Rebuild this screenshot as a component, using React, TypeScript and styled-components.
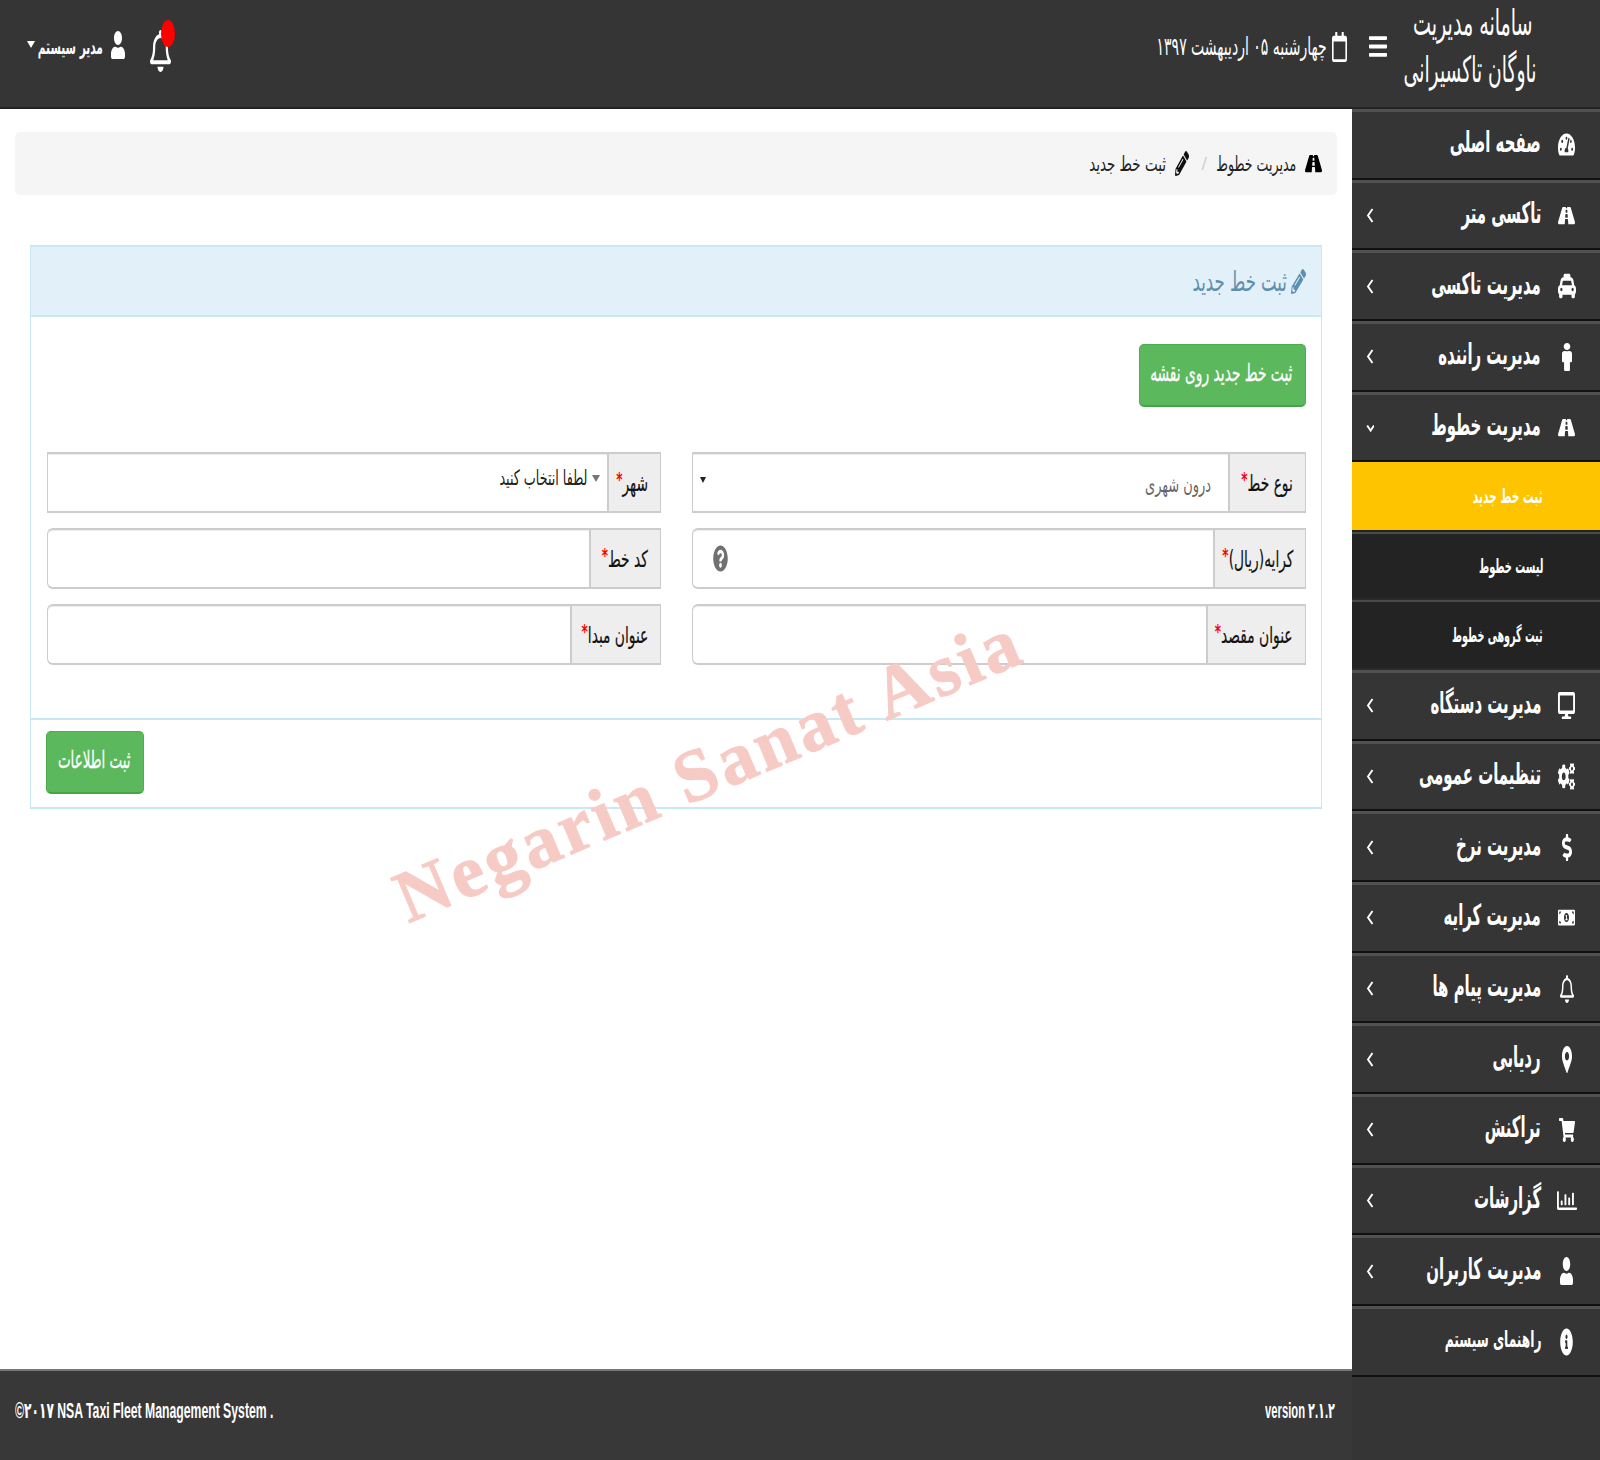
import React from 'react';
import styled, { createGlobalStyle } from 'styled-components';
import { IconType } from 'react-icons';
import {
  FaBars,
  FaCogs,
  FaDesktop,
  FaDollarSign,
  FaInfoCircle,
  FaMale,
  FaMapMarkerAlt,
  FaMoneyBillAlt,
  FaPencilAlt,
  FaQuestionCircle,
  FaRegBell,
  FaRegCalendar,
  FaRegChartBar,
  FaRoad,
  FaShoppingCart,
  FaTachometerAlt,
  FaTaxi,
  FaUser
} from 'react-icons/fa';

const GlobalStyle = createGlobalStyle`
  html, body {
    margin: 0;
    padding: 0;
    background: #fff;
  }
  body {
    font-family: "DejaVu Sans", "Noto Sans", sans-serif;
    direction: rtl;
  }
  * {
    box-sizing: border-box;
  }
`;

const Page = styled.div`
  width: 1600px;
  height: 1460px;
  display: flex;
  flex-direction: column;
  overflow: hidden;
  position: relative;
`;

const Squeeze = styled.span<{ $x: number; $origin?: string }>`
  display: inline-block;
  white-space: nowrap;
  transform: scaleX(${(p) => p.$x});
  transform-origin: ${(p) => p.$origin ?? 'right'} center;
`;

const Header = styled.header`
  height: 109px;
  flex: none;
  background: #353535;
  border-bottom: 2px solid #222;
  display: flex;
  align-items: center;
  color: #fff;
`;

const Brand = styled.div`
  width: 213px;
  flex: none;
  padding-right: 64px;
  margin-top: -16px;
  font-size: 36px;
  line-height: 47px;
  display: flex;
  flex-direction: column;
  align-items: flex-start;
`;

const BrandFirstLine = styled(Squeeze)`
  margin-right: 3px;
`;

const Burger = styled(FaBars)`
  width: 18px;
  height: 27px;
  margin-top: -14px;
  flex: none;
`;

const DateBox = styled.div`
  display: flex;
  align-items: center;
  gap: 5px;
  margin-right: 22px;
  margin-top: -14px;
  font-size: 25px;
`;

const DateIcon = styled(FaRegCalendar)`
  width: 15px;
  height: 30px;
`;

const HeaderLeft = styled.div`
  margin-right: auto;
  display: flex;
  align-items: center;
  padding-left: 27px;
  margin-top: -18px;
  flex-direction: row-reverse;
`;

const UserMenu = styled.div`
  display: flex;
  align-items: center;
  flex-direction: row-reverse;
  font-size: 20px;
  font-weight: bold;
`;

const Caret = styled.i<{ $color?: string; $size?: number }>`
  display: inline-block;
  border-style: solid;
  border-width: ${(p) => p.$size ?? 6}px ${(p) => (p.$size ?? 6) * 0.62}px 0;
  border-color: ${(p) => p.$color ?? '#fff'} transparent transparent;
`;

const NameBox = styled.span`
  width: 64px;
  margin-left: 4px;
  margin-top: 4px;
  display: inline-block;
`;

const UserIcon = styled(FaUser)`
  width: 14px;
  height: 28px;
  margin-left: 8px;
`;

const BellBox = styled.div`
  position: relative;
  margin-left: 25px;
  width: 21px;
  height: 42px;
  margin-top: 12px;
`;

const BellIcon = styled(FaRegBell)`
  width: 21px;
  height: 42px;
  display: block;
`;

const Badge = styled.span`
  position: absolute;
  top: -10px;
  left: 11px;
  width: 14px;
  height: 27px;
  border-radius: 50%;
  background: #f00;
`;

const Body = styled.div`
  flex: 1;
  display: flex;
  min-height: 0;
`;

const Sidebar = styled.nav`
  width: 248px;
  flex: none;
  background: #353535;
`;

const MenuRow = styled.div`
  height: 70.7px;
  display: flex;
  align-items: center;
  padding: 0 25px 0 14px;
  color: #fff;
  border-top: 3px solid #515151;
  border-bottom: 2px solid #111;
  background: #353535;
`;

const MenuIconBox = styled.span<{ $w: number; $h: number }>`
  width: 17px;
  height: 28px;
  flex: none;
  display: flex;
  align-items: center;
  justify-content: center;
  margin-left: 17px;

  svg {
    width: ${(p) => p.$w}px;
    height: ${(p) => p.$h}px;
    flex: none;
  }
`;

const MenuLabel = styled.span<{ $small?: boolean }>`
  font-size: ${(p) => (p.$small ? 23 : 29)}px;
  font-weight: bold;
  flex: 1;
  min-width: 0;
  margin-top: -5px;
`;

const Chevron = styled.svg`
  width: 8px;
  height: 17px;
  flex: none;
  fill: none;
  stroke: #fff;
  stroke-width: 1.9;
`;

const SubRow = styled.div<{ $active?: boolean; $height: number }>`
  height: ${(p) => p.$height}px;
  display: flex;
  align-items: center;
  padding-right: 57px;
  color: #fff;
  font-size: 20px;
  font-weight: bold;
  background: ${(p) => (p.$active ? '#ffc400' : '#232323')};
  border-top: ${(p) => (p.$active ? '0' : '2px solid #4a4a4a')};
  border-bottom: 2px solid ${(p) => (p.$active ? '#222' : '#2a2a2a')};
`;

const Main = styled.main`
  flex: 1;
  min-width: 0;
  display: flex;
  flex-direction: column;
  position: relative;
`;

const Content = styled.div`
  flex: 1;
  padding: 23px 15px 0;
`;

const Breadcrumb = styled.div`
  height: 63px;
  background: #f5f5f5;
  border-radius: 5px;
  display: flex;
  align-items: center;
  padding-right: 15px;
  color: #222;
  font-size: 21px;
  margin-bottom: 50px;
`;

const CrumbRoad = styled(FaRoad)`
  width: 17px;
  height: 23px;
  color: #000;
  margin-left: 9px;
`;

const CrumbText = styled.span<{ $width: number }>`
  width: ${(p) => p.$width}px;
  display: inline-block;
`;

const CrumbSep = styled.span`
  color: #ccc;
  margin: 0 9px 0 13px;
  font-size: 16px;
`;

const CrumbPencil = styled(FaPencilAlt)`
  width: 14px;
  height: 25px;
  color: #111;
  margin-left: 9px;
`;

const Panel = styled.section`
  margin: 0 15px;
  border: solid #c6e9f3;
  border-width: 2px 1px;
  height: 564px;
  display: flex;
  flex-direction: column;
`;

const PanelHead = styled.div`
  height: 70px;
  flex: none;
  background: #e1f0f9;
  border-bottom: 2px solid #c6e9f3;
  color: #5f8fae;
  display: flex;
  align-items: center;
  padding-right: 15px;
  font-size: 28px;
`;

const PanelPencil = styled(FaPencilAlt)`
  width: 15px;
  height: 25px;
  margin-left: 4px;
  color: #5f8fae;
`;

const PanelBody = styled.div`
  height: 401px;
  flex: none;
  padding: 27px 15px 0 16px;
`;

const GreenButton = styled.button<{ $width: number; $height: number }>`
  width: ${(p) => p.$width}px;
  height: ${(p) => p.$height}px;
  background: #5cb85c;
  border: 1px solid #4cae4c;
  border-bottom: 2px solid #46a546;
  border-radius: 5px;
  color: #fff;
  font-family: inherit;
  font-size: 24px;
  padding: 0 13px 5px;
  text-align: right;
  display: block;
  -webkit-text-stroke: 0.3px #fff;
`;

const Grid = styled.div`
  margin-top: 45px;
  display: grid;
  grid-template-columns: 1fr 1fr;
  column-gap: 31px;
  row-gap: 15px;
`;

const Group = styled.div`
  display: flex;
  height: 61px;
`;

const Addon = styled.label<{ $width: number }>`
  width: ${(p) => p.$width}px;
  flex: none;
  background: #eee;
  border: solid #ccc;
  border-width: 2px 1px 2px 2px;
  color: #111;
  font-size: 23px;
  display: flex;
  align-items: center;
  padding-right: 12px;
  -webkit-text-stroke: 0.2px #111;
`;

const Star = styled.span`
  color: #f00;
  font-size: 20px;
  font-weight: bold;
  position: relative;
  top: -5px;
  -webkit-text-stroke: 0;
`;

const Field = styled.div<{ $square?: boolean }>`
  flex: 1;
  min-width: 0;
  background: #fff;
  border: solid #ccc;
  border-width: 2px 0 2px 1px;
  border-radius: ${(p) => (p.$square ? '0' : '6px 0 0 6px')};
  box-shadow: inset 0 1px 1px rgba(0, 0, 0, 0.075);
  position: relative;
  display: flex;
  align-items: center;
`;

const SelectText = styled.span<{ $color: string; $offset: number; $lift: number }>`
  color: ${(p) => p.$color};
  font-size: 21px;
  margin-right: ${(p) => p.$offset}px;
  margin-top: ${(p) => p.$lift}px;
  display: inline-flex;
`;

const NativeArrow = styled(Caret)`
  margin: -6px auto 0 7px;
`;

const Question = styled(FaQuestionCircle)`
  position: absolute;
  left: 20px;
  top: 15px;
  width: 15px;
  height: 27px;
  color: #707070;
`;

const PanelFoot = styled.div`
  flex: 1;
  border-top: 2px solid #c6e9f3;
  padding: 11px 14px 11px 15px;
  display: flex;
  justify-content: flex-end;
`;

const Footer = styled.footer`
  height: 91px;
  flex: none;
  background: #383838;
  border-top: 2px solid #777;
  color: #fff;
  display: flex;
  align-items: center;
  justify-content: space-between;
  padding: 0 17px 10px 15px;
  font-family: "Liberation Sans", "DejaVu Sans", sans-serif;
  font-size: 22px;
  font-weight: bold;
`;

const Watermark = styled.div`
  position: absolute;
  left: 372px;
  top: 727px;
  font-family: "Liberation Serif", serif;
  font-weight: bold;
  font-size: 74px;
  letter-spacing: 3.6px;
  color: #f7cbc5;
  -webkit-text-stroke: 1px #f7cbc5;
  transform: rotate(-23deg);
  white-space: nowrap;
  direction: ltr;
  pointer-events: none;
`;

interface MenuEntry {
  label: string;
  icon: IconType;
  width: number;
  height: number;
  squeeze?: number;
  small?: boolean;
  noArrow?: boolean;
  open?: boolean;
}

const MENU_TOP: MenuEntry[] = [
  { label: 'صفحه اصلی', icon: FaTachometerAlt, width: 17, height: 25, noArrow: true },
  { label: 'تاکسی متر', icon: FaRoad, width: 17, height: 23 },
  { label: 'مدیریت تاکسی', icon: FaTaxi, width: 18, height: 28 },
  { label: 'مدیریت راننده', icon: FaMale, width: 10, height: 28 },
  { label: 'مدیریت خطوط', icon: FaRoad, width: 17, height: 23, open: true }
];

const SUB_MENU = [
  { label: 'ثبت خط جدید', active: true, height: 69.5, squeeze: 0.53 },
  { label: 'لیست خطوط', height: 68.5, squeeze: 0.49 },
  { label: 'ثبت گروهی خطوط', height: 69.5, squeeze: 0.48 }
];

const MENU_BOTTOM: MenuEntry[] = [
  { label: 'مدیریت دستگاه', icon: FaDesktop, width: 17, height: 27 },
  { label: 'تنظیمات عمومی', icon: FaCogs, width: 17, height: 27 },
  { label: 'مدیریت نرخ', icon: FaDollarSign, width: 10, height: 27 },
  { label: 'مدیریت کرایه', icon: FaMoneyBillAlt, width: 17, height: 21 },
  { label: 'مدیریت پیام ها', icon: FaRegBell, width: 14, height: 28 },
  { label: 'ردیابی', icon: FaMapMarkerAlt, width: 10, height: 27 },
  { label: 'تراکنش', icon: FaShoppingCart, width: 16, height: 24 },
  { label: 'گزارشات', icon: FaRegChartBar, width: 20, height: 25 },
  { label: 'مدیریت کاربران', icon: FaUser, width: 13, height: 28 },
  { label: 'راهنمای سیستم', icon: FaInfoCircle, width: 13, height: 28, small: true, squeeze: 0.53, noArrow: true }
];

function MenuItem({ entry }: { entry: MenuEntry }) {
  const Icon = entry.icon;
  return (
    <MenuRow>
      <MenuIconBox $w={entry.width} $h={entry.height}>
        <Icon preserveAspectRatio="none" />
      </MenuIconBox>
      <MenuLabel $small={entry.small}>
        <Squeeze $x={entry.squeeze ?? 0.515}>{entry.label}</Squeeze>
      </MenuLabel>
      {!entry.noArrow && (
        <Chevron viewBox="0 0 8 16">
          {entry.open ? <path d="M1.2 6 L4.6 11 L8 6" /> : <path d="M6.5 1.5 L2 8 L6.5 14.5" />}
        </Chevron>
      )}
    </MenuRow>
  );
}

function InputGroup({ label, width, children }: { label: string; width: number; children?: React.ReactNode }) {
  return (
    <Group>
      <Addon $width={width}>
        <Squeeze $x={0.6}>
          {label}
          <Star>*</Star>
        </Squeeze>
      </Addon>
      {children ?? <Field />}
    </Group>
  );
}

export default function App() {
  return (
    <>
      <GlobalStyle />
      <Page>
        <Header>
          <Brand>
            <BrandFirstLine $x={0.53}>سامانه مدیریت</BrandFirstLine>
            <Squeeze $x={0.52}>ناوگان تاکسیرانی</Squeeze>
          </Brand>
          <Burger preserveAspectRatio="none" />
          <DateBox>
            <DateIcon preserveAspectRatio="none" />
            <Squeeze $x={0.56}>چهارشنبه ۰۵ اردیبهشت ۱۳۹۷</Squeeze>
          </DateBox>
          <HeaderLeft>
            <UserMenu>
              <Caret $size={7} />
              <NameBox>
                <Squeeze $x={0.53}>مدیر سیستم</Squeeze>
              </NameBox>
              <UserIcon preserveAspectRatio="none" />
            </UserMenu>
            <BellBox>
              <BellIcon preserveAspectRatio="none" />
              <Badge />
            </BellBox>
          </HeaderLeft>
        </Header>
        <Body>
          <Sidebar>
            {MENU_TOP.map((entry) => (
              <MenuItem key={entry.label} entry={entry} />
            ))}
            {SUB_MENU.map((item) => (
              <SubRow key={item.label} $active={item.active} $height={item.height}>
                <Squeeze $x={item.squeeze}>{item.label}</Squeeze>
              </SubRow>
            ))}
            {MENU_BOTTOM.map((entry) => (
              <MenuItem key={entry.label} entry={entry} />
            ))}
          </Sidebar>
          <Main>
            <Content>
              <Breadcrumb>
                <CrumbRoad preserveAspectRatio="none" />
                <CrumbText $width={80}>
                  <Squeeze $x={0.6}>مدیریت خطوط</Squeeze>
                </CrumbText>
                <CrumbSep>/</CrumbSep>
                <CrumbPencil preserveAspectRatio="none" />
                <CrumbText $width={78}>
                  <Squeeze $x={0.64}>ثبت خط جدید</Squeeze>
                </CrumbText>
              </Breadcrumb>
              <Panel>
                <PanelHead>
                  <PanelPencil preserveAspectRatio="none" />
                  <Squeeze $x={0.59}>ثبت خط جدید</Squeeze>
                </PanelHead>
                <PanelBody>
                  <GreenButton $width={167} $height={63}>
                    <Squeeze $x={0.575}>ثبت خط جدید روی نقشه</Squeeze>
                  </GreenButton>
                  <Grid>
                    <InputGroup label="نوع خط" width={78}>
                      <Field $square>
                        <SelectText $color="#666" $offset={17} $lift={4}>
                          <Squeeze $x={0.617}>درون شهری</Squeeze>
                        </SelectText>
                        <NativeArrow $color="#222" $size={6} />
                      </Field>
                    </InputGroup>
                    <InputGroup label="شهر" width={54}>
                      <Field $square>
                        <SelectText $color="#777" $offset={7} $lift={-9}>
                          <Caret $color="#777" $size={7} />
                        </SelectText>
                        <SelectText $color="#222" $offset={5} $lift={-9}>
                          <Squeeze $x={0.605}>لطفا انتخاب کنید</Squeeze>
                        </SelectText>
                      </Field>
                    </InputGroup>
                    <InputGroup label="کرایه(ریال)" width={93}>
                      <Field>
                        <Question preserveAspectRatio="none" />
                      </Field>
                    </InputGroup>
                    <InputGroup label="کد خط" width={72} />
                    <InputGroup label="عنوان مقصد" width={100} />
                    <InputGroup label="عنوان مبدا" width={91} />
                  </Grid>
                </PanelBody>
                <PanelFoot>
                  <GreenButton $width={98} $height={63}>
                    <Squeeze $x={0.56}>ثبت اطلاعات</Squeeze>
                  </GreenButton>
                </PanelFoot>
              </Panel>
            </Content>
            <Footer>
              <span dir="ltr">
                <Squeeze $x={0.51} $origin="right">version ۲.۱.۲</Squeeze>
              </span>
              <span dir="ltr">
                <Squeeze $x={0.556} $origin="left">©۲۰۱۷ NSA Taxi Fleet Management System .</Squeeze>
              </span>
            </Footer>
          </Main>
        </Body>
        <Watermark>Negarin Sanat Asia</Watermark>
      </Page>
    </>
  );
}
